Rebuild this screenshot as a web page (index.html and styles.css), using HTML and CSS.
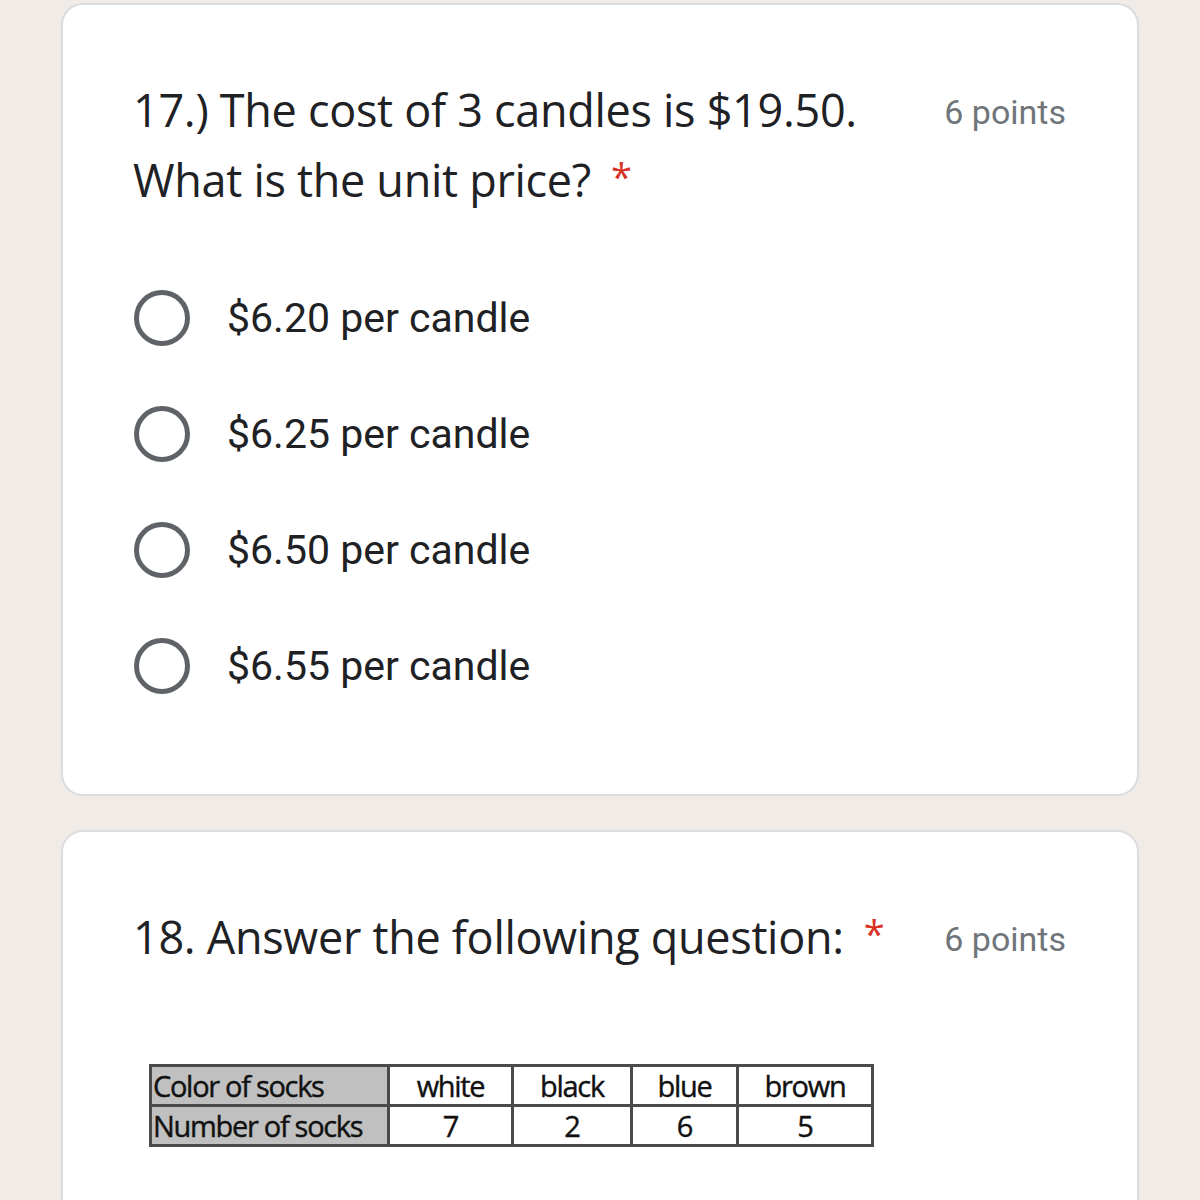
FILE: index.html
```html
<!DOCTYPE html>
<html>
<head>
<meta charset="utf-8">
<link rel="stylesheet" href="styles.css">
</head>
<body>
<div class="page">
  <section class="card">
    <div class="head">
      <div class="title">17.) The cost of 3 candles is $19.50. What is the unit price?<span class="req">*</span></div>
      <div class="points">6 points</div>
    </div>
    <div class="options">
      <div class="opt"><span class="radio"></span><span class="label">$6.20 per candle</span></div>
      <div class="opt"><span class="radio"></span><span class="label">$6.25 per candle</span></div>
      <div class="opt"><span class="radio"></span><span class="label">$6.50 per candle</span></div>
      <div class="opt"><span class="radio"></span><span class="label">$6.55 per candle</span></div>
    </div>
  </section>
  <section class="card card2">
    <div class="head">
      <div class="title">18. Answer the following question:<span class="req">*</span></div>
      <div class="points">6 points</div>
    </div>
    <table class="socks">
      <tr><th>Color of socks</th><td class="c1">white</td><td class="c2">black</td><td class="c3">blue</td><td class="c4">brown</td></tr>
      <tr><th>Number of socks</th><td>7</td><td>2</td><td>6</td><td>5</td></tr>
    </table>
  </section>
</div>
</body>
</html>
```

FILE: styles.css
```css
html, body {
  margin: 0;
  padding: 0;
  background: #f0ebe7;
  height: 1200px;
  overflow: hidden;
}
.page {
  display: flex;
  flex-direction: column;
  gap: 34px;
  padding: 3px 61px 0 61px;
  width: 1078px;
}
.card {
  background: #fff;
  border: 2px solid #dadce0;
  border-radius: 22px;
  padding: 70px 71px 70px 70px;
}
.card2 {
  padding-bottom: 200px;
}
.head {
  display: flex;
  align-items: flex-start;
  gap: 40px;
}
.title {
  flex: 1;
  font-family: "Open Sans", sans-serif;
  font-size: 45px;
  line-height: 70px;
  color: #202124;
  letter-spacing: -0.3px;
}
.req {
  color: #d93025;
  margin-left: 20px;
  font-size: 38px;
  line-height: 0;
  position: relative;
  top: -6px;
}
.points {
  font-family: "Roboto", sans-serif;
  font-size: 34px;
  line-height: 70px;
  color: #70757a;
  padding-top: 2px;
  white-space: nowrap;
}
.options {
  margin-top: 45px;
  display: flex;
  flex-direction: column;
}
.opt {
  height: 116px;
  display: flex;
  align-items: center;
}
.radio {
  width: 46px;
  height: 46px;
  border: 5px solid #5f6368;
  border-radius: 50%;
  margin-left: 1px;
  margin-right: 37px;
}
.label {
  font-family: "Roboto", sans-serif;
  font-size: 41px;
  color: #202124;
}
.socks {
  margin-top: 90px;
  margin-left: 16px;
  border-collapse: collapse;
  border: 3px solid #4a4a4a;
  font-family: "Open Sans", sans-serif;
  font-size: 29px;
  letter-spacing: -1.3px;
  color: #111;
  -webkit-text-stroke: 0.4px #111;
}
.socks th, .socks td {
  border: 3px solid #4a4a4a;
  height: 37px;
  padding: 0;
  line-height: 37px;
}
.socks th {
  background: #c0c0c0;
  text-align: left;
  font-weight: normal;
  width: 234px;
  padding-left: 1px;
}
.socks td {
  text-align: center;
}
.socks .c1 { width: 121px; }
.socks .c2 { width: 116px; }
.socks .c3 { width: 103px; }
.socks .c4 { width: 132px; }
```
